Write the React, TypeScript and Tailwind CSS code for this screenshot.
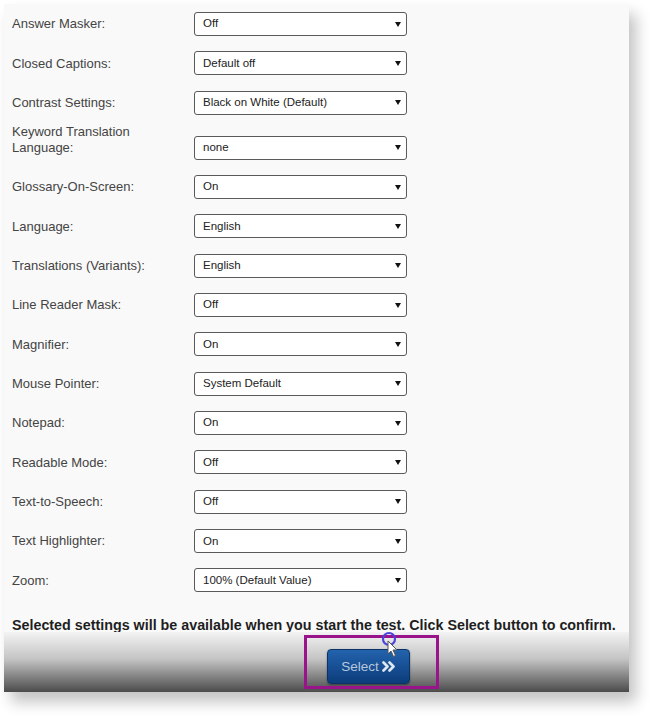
import React from 'react'

const settings = [
  { label: 'Answer Masker:', value: 'Off' },
  { label: 'Closed Captions:', value: 'Default off' },
  { label: 'Contrast Settings:', value: 'Black on White (Default)' },
  { label: 'Keyword Translation Language:', value: 'none', twoLine: true },
  { label: 'Glossary-On-Screen:', value: 'On' },
  { label: 'Language:', value: 'English' },
  { label: 'Translations (Variants):', value: 'English' },
  { label: 'Line Reader Mask:', value: 'Off' },
  { label: 'Magnifier:', value: 'On' },
  { label: 'Mouse Pointer:', value: 'System Default' },
  { label: 'Notepad:', value: 'On' },
  { label: 'Readable Mode:', value: 'Off' },
  { label: 'Text-to-Speech:', value: 'Off' },
  { label: 'Text Highlighter:', value: 'On' },
  { label: 'Zoom:', value: '100% (Default Value)' },
]

function FakeSelect({ value }: { value: string }) {
  return (
    <div className="flex h-[24px] w-[213px] shrink-0 items-center justify-between rounded-[3px] border-[1.5px] border-[#5a5a5a] bg-white pl-[8px] pr-[5px] text-[11.5px] text-[#222]">
      <span>{value}</span>
      <svg width="6" height="5" viewBox="0 0 6 5">
        <path d="M0 0 H6 L3 5 Z" fill="#111" />
      </svg>
    </div>
  )
}

export default function App() {
  return (
    <div className="min-h-[716px] bg-white pl-[4px] pt-[4px]" style={{ fontFamily: '"Liberation Sans", Arial, sans-serif' }}>
      <div className="relative flex h-[688px] w-[625px] flex-col bg-[#f9f9f9] shadow-[7px_10px_14px_rgba(0,0,0,0.24)]">
        <div className="flex flex-col pl-[8px] pt-[8px]">
          {settings.map((s, i) =>
            s.twoLine ? (
              <div key={i} className="mt-[9px] flex items-end">
                <div className="w-[182px] pb-[4px] text-[13px] leading-[16px] text-[#444]">
                  Keyword Translation
                  <br />
                  Language:
                </div>
                <FakeSelect value={s.value} />
              </div>
            ) : (
              <div key={i} className={i === 0 ? 'flex items-center' : 'mt-[15.35px] flex items-center'}>
                <div className="w-[182px] text-[13px] text-[#444]">{s.label}</div>
                <FakeSelect value={s.value} />
              </div>
            )
          )}
        </div>
        <p className="mt-[26px] pl-[8px] text-[14.3px] font-bold leading-[14px] text-[#1e1e1e]">
          Selected settings will be available when you start the test. Click Select button to confirm.
        </p>
        <div className="flex flex-1 items-start bg-[linear-gradient(to_bottom,#f3f3f3_0%,#c4c4c4_45%,#4b4b4b_100%)] pl-[323px] pt-[17px]">
          <button className="flex h-[35px] w-[83px] items-center justify-center gap-[2px] rounded-[4px] border border-[#0a3468] bg-[linear-gradient(to_bottom,#2363ad,#0c3c7b)] text-[13.5px] text-[#b7c7db] shadow-[0_1px_2px_rgba(0,0,0,0.4)]">
            <span>Select</span>
            <svg width="14" height="11" viewBox="0 0 14 11" className="ml-[1px]">
              <path d="M1.5 1.5 L5.5 5.5 L1.5 9.5 M7.5 1.5 L11.5 5.5 L7.5 9.5" fill="none" stroke="#dfe7f0" strokeWidth="2.6" strokeLinecap="round" strokeLinejoin="round" />
            </svg>
          </button>
        </div>
        <div className="pointer-events-none absolute left-[300px] top-[631px] h-[54px] w-[135px] border-[3px] border-[#99148b]" />
        <svg className="pointer-events-none absolute left-[376px] top-[626px]" width="24" height="30" viewBox="0 0 24 30">
          <circle cx="9" cy="9" r="6" fill="none" stroke="#4a45d8" strokeWidth="2.2" />
          <path d="M8 11 L8 24 L11 21 L13.5 26.5 L15.5 25.5 L13 20 L17 20 Z" fill="#ffffff" stroke="#555" strokeWidth="1" strokeLinejoin="round" />
        </svg>
      </div>
    </div>
  )
}
